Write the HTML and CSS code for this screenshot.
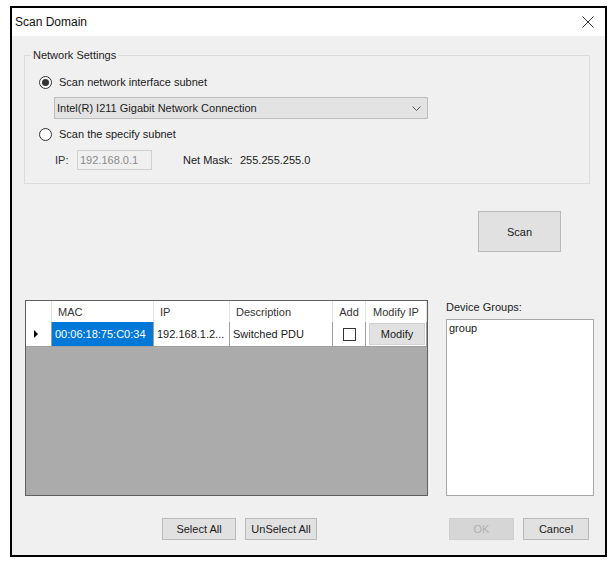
FILE: index.html
```html
<!DOCTYPE html>
<html>
<head>
<meta charset="utf-8">
<link rel="stylesheet" href="styles.css">
</head>
<body>
<div class="window">
  <div class="titlebar">
    <span class="title">Scan Domain</span>
    <svg class="close" width="12" height="12" viewBox="0 0 12 12"><path d="M0.5 0.5 L11.5 11.5 M11.5 0.5 L0.5 11.5" stroke="#333" stroke-width="1" fill="none"/></svg>
  </div>
  <div class="content">
    <fieldset class="group">
      <legend class="legend">Network Settings</legend>
      <div class="group-inner">
        <div class="radio-row first">
          <span class="radio checked"></span>
          <span class="label">Scan network interface subnet</span>
        </div>
        <div class="combo">
          <span class="combo-text">Intel(R) I211 Gigabit Network Connection</span>
          <svg class="chev" width="9" height="5" viewBox="0 0 9 5"><path d="M0.5 0.5 L4.5 4.5 L8.5 0.5" stroke="#555" stroke-width="1" fill="none"/></svg>
        </div>
        <div class="radio-row second">
          <span class="radio"></span>
          <span class="label">Scan the specify subnet</span>
        </div>
        <div class="ip-row">
          <span class="ip-label">IP:</span>
          <span class="textbox">192.168.0.1</span>
          <span class="mask-label">Net Mask:</span>
          <span class="mask-value">255.255.255.0</span>
        </div>
      </div>
    </fieldset>
    <div class="scan-row">
      <div class="btn scan">Scan</div>
    </div>
    <div class="data-row">
      <div class="grid">
        <div class="cell hdr rowhdr"></div>
        <div class="cell hdr">MAC</div>
        <div class="cell hdr">IP</div>
        <div class="cell hdr">Description</div>
        <div class="cell hdr center">Add</div>
        <div class="cell hdr center">Modify IP</div>
        <div class="cell data rowhdr"><span class="arrow"></span></div>
        <div class="cell data selected">00:06:18:75:C0:34</div>
        <div class="cell data">192.168.1.2...</div>
        <div class="cell data">Switched PDU</div>
        <div class="cell data center"><span class="checkbox"></span></div>
        <div class="cell data modify-cell"><div class="modify">Modify</div></div>
      </div>
      <div class="groups">
        <div class="groups-label">Device Groups:</div>
        <div class="listbox"><div class="list-item">group</div></div>
      </div>
    </div>
    <div class="bottom-row">
      <div class="btn select-all">Select All</div>
      <div class="btn unselect-all">UnSelect All</div>
      <div class="btn ok disabled">OK</div>
      <div class="btn cancel">Cancel</div>
    </div>
  </div>
</div>
</body>
</html>
```

FILE: styles.css
```css
* { box-sizing: border-box; }
html, body {
  margin: 0;
  padding: 0;
  background: #ffffff;
}
body {
  font-family: "Liberation Sans", Arial, sans-serif;
  font-size: 11px;
  color: #1a1a1a;
  width: 614px;
  height: 565px;
  overflow: hidden;
}
.window {
  margin: 6px 0 0 10px;
  width: 597px;
  height: 551px;
  border: 2px solid #000;
  display: flex;
  flex-direction: column;
}
.titlebar {
  height: 28px;
  background: #ffffff;
  display: flex;
  align-items: center;
  justify-content: space-between;
  padding: 0 11px 0 3px;
}
.title {
  font-size: 12px;
  color: #111;
}
.close { display: block; }
.content {
  flex: 1;
  background: #f0f0f0;
  display: flex;
  flex-direction: column;
}
.group {
  margin: 13px 15px 0 12px;
  padding: 0;
  border: 1px solid #dcdcdc;
  height: 135px;
  min-width: 0;
}
.legend {
  padding: 0 2px;
  margin-left: 6px;
  line-height: 13px;
  color: #222;
}
.group-inner {
  padding: 12px 0 0 14px;
}
.radio-row {
  display: flex;
  align-items: center;
  height: 16px;
}
.radio-row.second { margin-top: 7px; }
.radio {
  width: 13px;
  height: 13px;
  border: 1px solid #333;
  border-radius: 50%;
  background: #fff;
  display: flex;
  align-items: center;
  justify-content: center;
  flex: none;
}
.radio.checked::after {
  content: "";
  width: 7px;
  height: 7px;
  border-radius: 50%;
  background: #333;
}
.label { margin-left: 7px; }
.combo {
  margin: 7px 0 0 15px;
  width: 374px;
  height: 22px;
  background: #e3e3e3;
  border: 1px solid #bdbdbd;
  display: flex;
  align-items: center;
  justify-content: space-between;
  padding: 0 6px 0 2px;
}
.chev { display: block; }
.ip-row {
  display: flex;
  align-items: center;
  margin-top: 8px;
  height: 20px;
  padding-left: 16px;
}
.ip-label { width: 22px; color: #333; }
.textbox {
  width: 75px;
  height: 20px;
  border: 1px solid #cfcfcf;
  background: #f0f0f0;
  color: #8a8a8a;
  padding-left: 2px;
  display: flex;
  align-items: center;
}
.mask-label { margin-left: 31px; width: 57px; }
.scan-row {
  display: flex;
  justify-content: flex-end;
  margin-top: 27px;
  padding-right: 44px;
}
.btn {
  background: #e1e1e1;
  border: 1px solid #b9b9b9;
  display: flex;
  align-items: center;
  justify-content: center;
  color: #1a1a1a;
}
.scan { width: 83px; height: 41px; }
.data-row {
  display: flex;
  margin-top: 48px;
  padding-left: 13px;
}
.grid {
  width: 403px;
  height: 196px;
  border: 1px solid #5f5f5f;
  background: #ababab;
  display: grid;
  grid-template-columns: 26px 102px 76px 103px 33px 61px;
  grid-template-rows: 21px 25px;
  align-content: start;
}
.cell {
  display: flex;
  align-items: center;
  background: #fff;
  white-space: nowrap;
  overflow: hidden;
}
.cell.hdr {
  border-right: 1px solid #e3e3e3;
  padding-left: 6px;
  color: #333;
}
.cell.data {
  border-right: 1px solid #a0a0a0;
  border-bottom: 1px solid #a0a0a0;
  padding-left: 3px;
}
.cell.center { justify-content: center; padding-left: 0; }
.cell.rowhdr { padding-left: 8px; }
.arrow {
  width: 0;
  height: 0;
  border-top: 4px solid transparent;
  border-bottom: 4px solid transparent;
  border-left: 4px solid #000;
}
.cell.selected {
  background: #0078d7;
  color: #fff;
  border-right-color: #a0a0a0;
}
.checkbox {
  width: 13px;
  height: 13px;
  border: 1px solid #333;
  background: #fff;
}
.modify-cell { padding: 1px 1px 1px 2px; }
.modify {
  width: 100%;
  height: 100%;
  background: #e1e1e1;
  border: 1px solid #d0d0d0;
  display: flex;
  align-items: center;
  justify-content: center;
}
.groups {
  margin-left: 18px;
  width: 148px;
  display: flex;
  flex-direction: column;
}
.groups-label {
  margin-top: 1px;
  line-height: 13px;
  height: 14px;
  color: #222;
}
.listbox {
  margin-top: 4px;
  height: 177px;
  background: #fff;
  border: 1px solid #a8a8a8;
  padding: 2px 0 0 2px;
}
.list-item { line-height: 13px; }
.bottom-row {
  display: flex;
  margin-top: 22px;
  padding-left: 150px;
}
.bottom-row .btn { height: 22px; }
.select-all { width: 74px; }
.unselect-all { width: 72px; margin-left: 9px; }
.ok { width: 65px; margin-left: 132px; }
.cancel { width: 66px; margin-left: 9px; }
.btn.disabled {
  background: #d6d6d6;
  border-color: #cfcfcf;
  color: #b0b0b0;
}
```
